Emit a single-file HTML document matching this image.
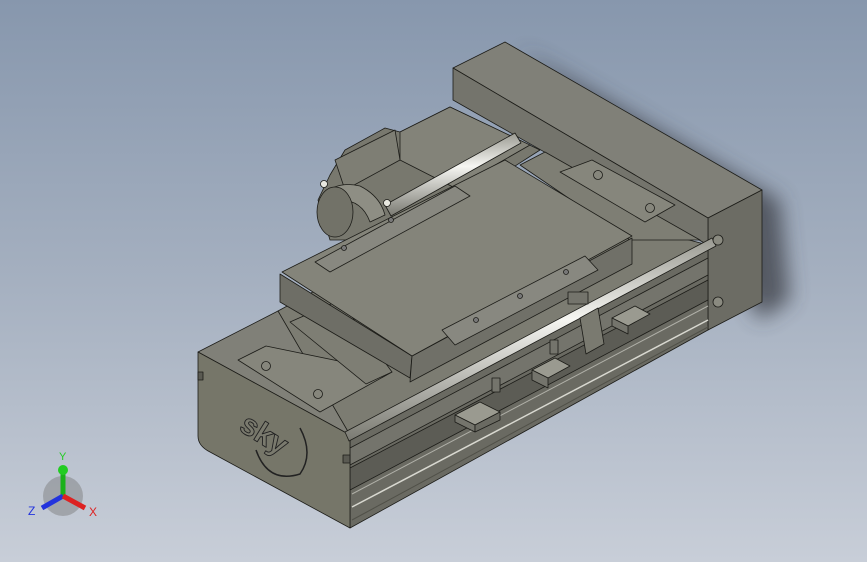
<!DOCTYPE html>
<html><head><meta charset="utf-8"><style>
html,body{margin:0;padding:0;width:867px;height:562px;overflow:hidden}
body{background:linear-gradient(180deg,#8797ad 0%,#a5b0c0 50%,#c8ced8 100%)}
svg{position:absolute;left:0;top:0}
</style></head><body>
<svg width="867" height="562" viewBox="0 0 867 562" xmlns="http://www.w3.org/2000/svg">
<defs>
<filter id="bl" x="-20%" y="-20%" width="140%" height="140%"><feGaussianBlur stdDeviation="10"/></filter>
<linearGradient id="rail" x1="0" y1="0" x2="0" y2="1"><stop offset="0" stop-color="#9a9a92"/><stop offset="0.4" stop-color="#f6f6f2"/><stop offset="1" stop-color="#7a7a72"/></linearGradient>
</defs>
<g stroke="#1c1c18" stroke-width="0.8" stroke-linejoin="round">
<polygon points="520,50 780,200 790,300 760,320 710,230" fill="#3a3d44" opacity="0.75" stroke="none" filter="url(#bl)"/>
<polygon points="453,68 505,42 762,190 708,218" fill="#808078"/>
<polygon points="708,218 762,190 762,302 708,330" fill="#6c6c64"/>
<polygon points="453,68 708,218 708,245 453,100" fill="#74746c"/>
<polygon points="318,200 330,175 345,150 385,128 400,132 450,107 540,150 470,195 400,240 330,240" fill="#78786e"/>
<polygon points="400,132 450,107 530,145 455,188 400,160" fill="#838379"/>
<polygon points="335,160 395,130 400,160 345,190" fill="#7e7e74"/>
<path d="M320,198 Q335,180 360,186 Q380,196 385,215 L370,222 Q362,200 340,200 Z" fill="#8e8e84"/>
<ellipse cx="335" cy="212" rx="18" ry="25" fill="#727268"/>
<polygon points="385,205 515,133 521,143 391,216" fill="url(#rail)"/>
<circle cx="324" cy="184" r="3.5" fill="#e8e8e0"/>
<circle cx="387" cy="203" r="3.5" fill="#e8e8e0"/>
<polygon points="198,352 278,311 708,245 350,435" fill="#808078"/>
<polygon points="278,311 500,190 708,245 350,435" fill="#7c7c72"/>
<polygon points="350,435 708,245 708,330 350,528" fill="#6a6a62"/>
<polygon points="350,448 708,258 708,275 350,465" fill="#74746c"/>
<polygon points="350,468 708,280 708,300 350,490" fill="#5c5c55"/>
<line x1="352" y1="507" x2="708" y2="320" stroke="#d8d8d0" stroke-width="1.5"/>
<line x1="352" y1="494" x2="708" y2="306" stroke="#b0b0a8" stroke-width="1"/>
<line x1="352" y1="520" x2="708" y2="327" stroke="#505048" stroke-width="1"/>
<path d="M198,352 L350,435 L350,528 L210,452 Q198,446 198,436 Z" fill="#767669"/>
<rect x="198" y="372" width="5" height="8" fill="#5a5a52"/>
<rect x="343" y="455" width="7" height="8" fill="#5a5a52"/>
<path d="M256,450 Q268,484 300,474 Q314,454 300,428" fill="none" stroke="#222" stroke-width="1.5"/>
<text x="236" y="444" font-family="Liberation Sans, sans-serif" font-size="30" font-weight="bold" fill="#7a7a6e" stroke="#222" stroke-width="0.9" transform="rotate(32 262 440)">sky</text>
<polygon points="238,360 266,346 392,372 320,412" fill="#86867c"/>
<polygon points="290,322 340,300 392,372 366,384" fill="#7e7e74"/>
<circle cx="266" cy="366" r="4.5" fill="#86867c"/>
<circle cx="318" cy="394" r="4.5" fill="#86867c"/>
<polygon points="520,165 545,152 700,240 630,240" fill="#7e7e74"/>
<polygon points="560,172 592,160 675,205 645,222" fill="#86867c"/>
<circle cx="598" cy="175" r="4.5" fill="#86867c"/>
<circle cx="650" cy="208" r="4.5" fill="#86867c"/>
<polygon points="280,274 280,302 410,378 412,356" fill="#6e6e66"/>
<polygon points="412,356 632,238 632,264 410,382" fill="#707068"/>
<polygon points="282,272 505,160 632,236 412,356" fill="#84847a"/>
<polygon points="315,262 455,186 470,196 330,272" fill="#888880"/>
<polygon points="442,330 585,256 598,270 455,345" fill="#888880"/>
<circle cx="344" cy="248" r="2.5" fill="#777"/>
<circle cx="391" cy="220" r="2.5" fill="#777"/>
<circle cx="520" cy="296" r="2.5" fill="#777"/>
<circle cx="566" cy="272" r="2.5" fill="#777"/>
<circle cx="476" cy="320" r="2.5" fill="#777"/>
<polygon points="345,432 712,238 716,246 349,441" fill="url(#rail)"/>
<polygon points="455,415 480,402 500,412 475,425" fill="#9a9a90"/>
<polygon points="455,415 475,425 475,432 455,422" fill="#74746c"/>
<polygon points="475,425 500,412 500,420 475,432" fill="#6a6a62"/>
<polygon points="532,370 555,358 570,366 548,378" fill="#9a9a90"/>
<polygon points="532,370 548,378 548,388 532,380" fill="#74746c"/>
<polygon points="612,318 635,306 650,314 628,326" fill="#9a9a90"/>
<polygon points="612,318 628,326 628,334 612,326" fill="#74746c"/>
<polygon points="580,318 598,308 604,344 586,354" fill="#7a7a70"/>
<rect x="568" y="292" width="20" height="12" fill="#74746c"/>
<rect x="492" y="378" width="8" height="14" fill="#74746c"/>
<rect x="550" y="340" width="8" height="14" fill="#74746c"/>
<circle cx="718" cy="240" r="5" fill="#8a8a80"/>
<circle cx="718" cy="302" r="5" fill="#8a8a80"/>
</g>
<g>
<ellipse cx="63" cy="496" rx="20" ry="20" fill="#777" opacity="0.45"/>
<line x1="63" y1="496" x2="63" y2="470" stroke="#1bb11b" stroke-width="5"/>
<circle cx="63" cy="470" r="5" fill="#22cc22"/>
<line x1="63" y1="496" x2="42" y2="508" stroke="#2233dd" stroke-width="5"/>
<line x1="63" y1="496" x2="85" y2="508" stroke="#dd2222" stroke-width="5"/>
<text x="59" y="460" font-family="Liberation Sans, sans-serif" font-size="11" fill="#22cc22">Y</text>
<text x="28" y="515" font-family="Liberation Sans, sans-serif" font-size="12" fill="#2233dd">Z</text>
<text x="89" y="516" font-family="Liberation Sans, sans-serif" font-size="12" fill="#dd2222">X</text>
</g>
</svg>
</body></html>
